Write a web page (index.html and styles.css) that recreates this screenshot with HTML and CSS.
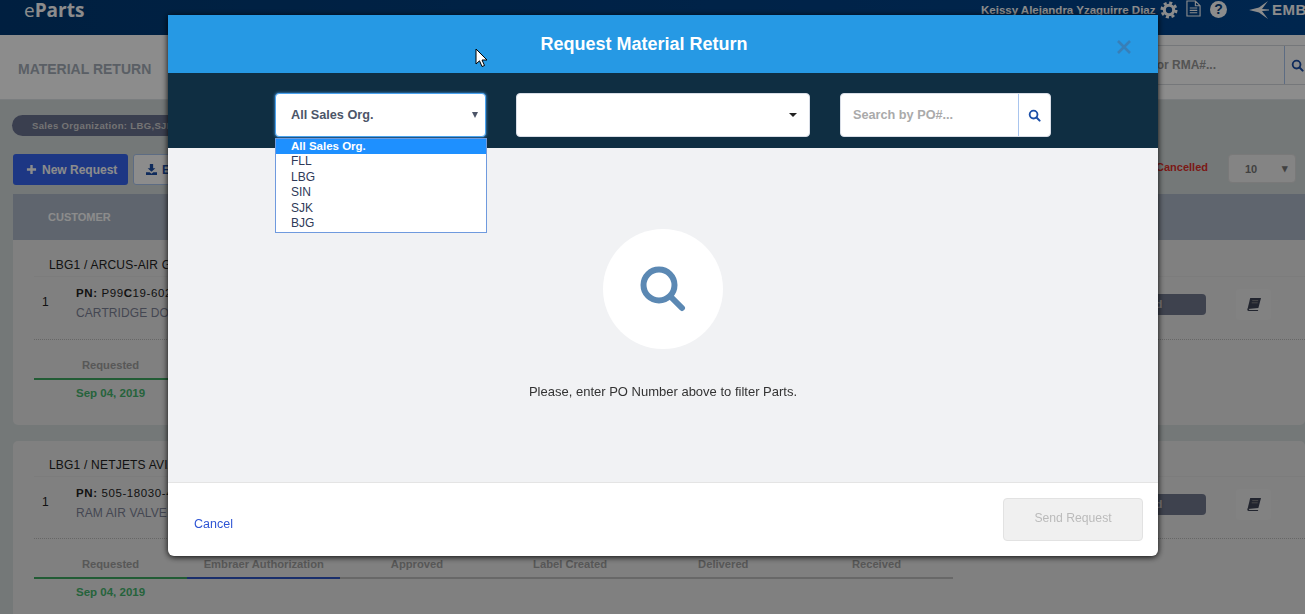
FILE: index.html
```html
<!DOCTYPE html>
<html lang="en">
<head>
    <meta charset="UTF-8">
    <meta name="viewport" content="width=device-width, initial-scale=1.0">
    <title>eParts - Material Return</title>
    <link rel="stylesheet" href="styles.css">
</head>
<body>
    <header class="topbar">
        <div class="brand"><span class="brand-e">e</span>Parts</div>
        <div class="topbar-right">
            <span class="user-name">Keissy Alejandra Yzaguirre Diaz</span>
            <svg class="top-icon gear" viewBox="0 0 20 20"><circle cx="10" cy="10" r="5.2" fill="none" stroke="#fff" stroke-width="3.4"/><circle cx="10" cy="10" r="8" fill="none" stroke="#fff" stroke-width="3" stroke-dasharray="3.4 2.88"/></svg>
            <svg class="top-icon doc" viewBox="0 0 16 18"><path d="M1 1h9l5 5v11H1zM10 1v5h5M4 8.500h8M4 11h8M4 13.500h8" fill="none" stroke="#fff" stroke-width="1.200"/></svg>
            <span class="help-icon">?</span>
            <svg class="logo-mark" viewBox="0 0 20 20"><path d="M0 10 10 7.500 19 1l-6 8 7 .5v1l-7 .5 6 8-9-6.500z" fill="#fff"/></svg>
            <span class="logo-text">EMBRAER</span>
        </div>
    </header>

    <section class="subbar">
        <h1>MATERIAL RETURN</h1>
        <div class="sub-search">
            <span class="sub-search-text">Search by PN or RMA#...</span>
            <span class="sub-search-btn">
                <svg class="mini-search" viewBox="0 0 14 14"><circle cx="6" cy="6" r="4.2" fill="none" stroke="#1c4fa8" stroke-width="2"/><path d="m9.2 9.2 3.3 3.3" stroke="#1c4fa8" stroke-width="2.2" stroke-linecap="round"/></svg>
            </span>
        </div>
    </section>

    <main class="content">
        <div class="pill">Sales Organization: LBG,SJK,SIN,FLL,BJG</div>
        <div class="toolbar">
            <button class="btn-primary">
                <svg class="btn-icon" viewBox="0 0 12 12"><path d="M6 1v10M1 6h10" stroke="#fff" stroke-width="2.6"/></svg>
                New Request
            </button>
            <button class="btn-outline">
                <svg class="btn-icon" viewBox="0 0 12 12"><path d="M4.2 0h3.6v4.5h2.4L6 8.5 1.8 4.5h2.4zM0 9h4l2 1.5L8 9h4v3H0z" fill="#1c4fa8"/></svg>
                Export
            </button>
            <div class="toolbar-right">
                <span class="status-cancelled">Cancelled</span>
                <div class="page-size"><span>10</span><span class="arrow">▾</span></div>
            </div>
        </div>

        <div class="table-head"><span>CUSTOMER</span></div>

        <article class="card">
            <div class="card-title">LBG1 / ARCUS-AIR GMBH</div>
            <div class="part-row">
                <span class="qty">1</span>
                <div class="part-info">
                    <div class="pn"><span class="pn-label">PN:</span> P99<b>C</b>19-602</div>
                    <div class="part-name">CARTRIDGE DOOR</div>
                </div>
                <span class="badge">Requested</span>
                <span class="book-btn">
                    <svg class="book" viewBox="0 0 14 13"><path d="M3.200 0H14l-2.600 10H.8z" fill="#3f4456"/><path d="M5.200 2.600h6M4.700 4.800h6" stroke="#8a8a8a" stroke-width=".9"/><path d="M.8 10C0 11 0 13 2 13h8.800l.5-1H2.400c-.8 0-.8-1 0-1h9z" fill="#3f4456"/></svg>
                </span>
            </div>
            <div class="steps">
                <div class="step done"><span class="step-label">Requested</span><span class="step-date">Sep 04, 2019</span></div>
                <div class="step"><span class="step-label">Embraer Authorization</span></div>
                <div class="step"><span class="step-label">Approved</span></div>
                <div class="step"><span class="step-label">Label Created</span></div>
                <div class="step"><span class="step-label">Delivered</span></div>
                <div class="step"><span class="step-label">Received</span></div>
            </div>
        </article>

        <article class="card">
            <div class="card-title">LBG1 / NETJETS AVIATION</div>
            <div class="part-row">
                <span class="qty">1</span>
                <div class="part-info">
                    <div class="pn"><span class="pn-label">PN:</span> 505-18030-4</div>
                    <div class="part-name">RAM AIR VALVE</div>
                </div>
                <span class="badge">Requested</span>
                <span class="book-btn">
                    <svg class="book" viewBox="0 0 14 13"><path d="M3.200 0H14l-2.600 10H.8z" fill="#3f4456"/><path d="M5.200 2.600h6M4.700 4.800h6" stroke="#8a8a8a" stroke-width=".9"/><path d="M.8 10C0 11 0 13 2 13h8.800l.5-1H2.400c-.8 0-.8-1 0-1h9z" fill="#3f4456"/></svg>
                </span>
            </div>
            <div class="steps">
                <div class="step done"><span class="step-label">Requested</span><span class="step-date">Sep 04, 2019</span></div>
                <div class="step current"><span class="step-label">Embraer Authorization</span></div>
                <div class="step"><span class="step-label">Approved</span></div>
                <div class="step"><span class="step-label">Label Created</span></div>
                <div class="step"><span class="step-label">Delivered</span></div>
                <div class="step"><span class="step-label">Received</span></div>
            </div>
        </article>
    </main>

    <div class="scrim"></div>

    <div class="modal">
        <div class="modal-header">
            <h2>Request Material Return</h2>
            <svg class="modal-close" viewBox="0 0 14 14"><path d="M1 1l12 12M13 1 1 13" stroke="#377fb8" stroke-width="2.600"/></svg>
        </div>
        <div class="modal-filters">
            <div class="select-wrap">
                <div class="fake-select focused">
                    <span>All Sales Org.</span>
                    <span class="select-arrow"></span>
                </div>
                <ul class="select-list">
                    <li class="active">All Sales Org.</li>
                    <li>FLL</li>
                    <li>LBG</li>
                    <li>SIN</li>
                    <li>SJK</li>
                    <li>BJG</li>
                </ul>
            </div>
            <div class="fake-select wide"><span class="select-arrow dark"></span></div>
            <div class="po-search">
                <span class="po-text">Search by PO#...</span>
                <span class="po-btn">
                    <svg class="mini-search" viewBox="0 0 14 14"><circle cx="6" cy="6" r="4.2" fill="none" stroke="#1c4fa8" stroke-width="2"/><path d="m9.2 9.2 3.3 3.3" stroke="#1c4fa8" stroke-width="2.2" stroke-linecap="round"/></svg>
                </span>
            </div>
        </div>
        <div class="modal-body">
            <div class="empty-circle">
                <svg class="empty-icon" viewBox="0 0 46 46"><circle cx="19" cy="19" r="15.500" fill="none" stroke="#5b88b3" stroke-width="6"/><path d="m31 31 11 11" stroke="#5b88b3" stroke-width="6" stroke-linecap="round"/></svg>
            </div>
            <p class="empty-text">Please, enter PO Number above to filter Parts.</p>
        </div>
        <div class="modal-footer">
            <a class="cancel-link">Cancel</a>
            <button class="send-btn">Send Request</button>
        </div>
    </div>

    <svg class="cursor" viewBox="0 0 13 20"><path d="M1 1v15l3.500-3.200L7 18.500l2.500-1L7 12h5z" fill="#fff" stroke="#000" stroke-width="1"/></svg>
</body>
</html>
```

FILE: styles.css
```css
html, body {
    height: 100%;
    overflow: hidden;
}

body {
    margin: 0;
    font-family: "Liberation Sans", Arial, sans-serif;
    font-size: 12px;
    background-color: #d4dbdb;
    color: #333;
}

/* page behind the dialog */
.topbar {
    height: 35px;
    box-sizing: border-box;
    padding: 0 0 0 24px;
    display: flex;
    justify-content: space-between;
    background: linear-gradient(to right, #003a75, #00458f);
    color: #fff;
}

.brand {
    font-family: "Open Sans", sans-serif;
    font-size: 19px;
    font-weight: 700;
    line-height: 20px;
    color: #fff;
}

.brand-e {
    font-weight: 400;
}

.topbar-right {
    display: flex;
    align-items: center;
    height: 19px;
    width: 324px;
    flex-shrink: 0;
    overflow: hidden;
    white-space: nowrap;
}

.user-name {
    padding-top: 1px;
    font-size: 11.5px;
    font-weight: 700;
    width: 179px;
    flex-shrink: 0;
}

.top-icon {
    flex-shrink: 0;
}

.gear {
    width: 18px;
    height: 18px;
}

.doc {
    width: 15px;
    height: 17px;
    margin-left: 8px;
    margin-top: -3px;
}

.help-icon {
    flex-shrink: 0;
    width: 17px;
    height: 17px;
    margin-left: 9px;
    border-radius: 50%;
    background-color: #fff;
    color: #003e80;
    font-size: 14px;
    font-weight: 700;
    line-height: 17px;
    text-align: center;
}

.logo-mark {
    flex-shrink: 0;
    width: 20px;
    height: 20px;
    margin-left: 22px;
}

.logo-text {
    margin-left: 3px;
    font-size: 15px;
    font-weight: 700;
    letter-spacing: .5px;
}

.subbar {
    height: 65px;
    box-sizing: border-box;
    padding: 10px 0 0 18px;
    display: flex;
    justify-content: space-between;
    background-color: #fff;
    border-bottom: 1px solid #dfe4e8;
}

.subbar h1 {
    margin: 0;
    font-size: 14px;
    font-weight: 700;
    line-height: 48px;
    color: #a5adb8;
}

.sub-search {
    width: 340px;
    height: 40px;
    margin-right: -15px;
    box-sizing: border-box;
    display: flex;
    justify-content: space-between;
    align-items: center;
    border: 1px solid #d6d9de;
    background-color: #fff;
    border-radius: 3px;
}

.sub-search-text {
    margin-left: 95px;
    font-size: 12px;
    font-weight: 700;
    color: #999;
}

.sub-search-btn {
    width: 35px;
    height: 38px;
    display: flex;
    align-items: center;
    border-left: 1px solid #a9c5ee;
    padding-left: 6px;
    box-sizing: border-box;
}

.mini-search {
    width: 13px;
    height: 13px;
}

.content {
    padding: 15px 0 0 13px;
}

.pill {
    width: 240px;
    height: 21px;
    margin-left: -1px;
    padding-left: 20px;
    box-sizing: border-box;
    border-radius: 11px;
    background-color: #6b7390;
    color: #d4d4d4;
    font-size: 9.5px;
    font-weight: 700;
    letter-spacing: .35px;
    line-height: 21px;
    white-space: nowrap;
    overflow: hidden;
}

.toolbar {
    height: 31px;
    margin: 18px 9px 9px 0;
    display: flex;
    gap: 5px;
}

.toolbar button {
    height: 31px;
    border-radius: 3px;
    font-family: inherit;
    font-size: 12px;
    font-weight: 700;
    display: flex;
    align-items: center;
    gap: 5px;
}

.btn-primary {
    width: 115px;
    padding: 0 0 0 13px;
    border: none;
    background-color: #3565f0;
    color: #fff;
}

.btn-outline {
    width: 100px;
    padding: 0 0 0 12px;
    border: 1px solid #a9c5ee;
    background-color: #fff;
    color: #1c4fa8;
}

.btn-icon {
    width: 11px;
    height: 11px;
}

.toolbar-right {
    margin-left: auto;
    display: flex;
    gap: 20px;
}

.status-cancelled {
    font-size: 11px;
    font-weight: 700;
    color: #e0302a;
    line-height: 27px;
}

.page-size {
    width: 68px;
    height: 29px;
    box-sizing: border-box;
    padding: 0 7px 0 16px;
    display: flex;
    justify-content: space-between;
    align-items: center;
    border: 1px solid #dcdcdc;
    border-radius: 4px;
    background-color: #f0f0f0;
    color: #777;
    font-size: 11px;
    font-weight: 700;
}

.table-head {
    height: 46px;
    padding-left: 35px;
    background-color: #aeb9c8;
    color: #fff;
    font-size: 11px;
    font-weight: 700;
    line-height: 46px;
}

.card {
    height: 185px;
    margin-bottom: 16px;
    box-sizing: border-box;
    padding: 18px 0 0 21px;
    background-color: #e9e9e9;
    border-radius: 0 0 5px 5px;
}

.card + .card {
    padding-top: 17px;
    border-radius: 5px;
}

.card-title {
    padding-left: 15px;
    font-size: 12px;
    letter-spacing: .2px;
    line-height: 14px;
    color: #222;
}

.part-row {
    height: 64px;
    margin-top: 4px;
    padding-right: 34px;
    box-sizing: border-box;
    display: flex;
    align-items: flex-start;
    border-bottom: 1px dotted #bbb;
    border-top: 1px solid #e2e2e2;
}

.card + .card .part-row {
    height: 63px;
}

.qty {
    width: 42px;
    padding: 18px 0 0 8px;
    box-sizing: border-box;
    font-size: 12px;
    color: #222;
}

.part-info {
    flex: 1;
    padding-top: 9px;
    font-size: 11.5px;
    white-space: nowrap;
}

.pn {
    line-height: 14px;
    letter-spacing: .6px;
    color: #222;
}

.pn-label {
    font-weight: 700;
}

.part-name {
    margin-top: 6px;
    font-size: 12px;
    letter-spacing: .1px;
    color: #7d8296;
}

.badge {
    width: 100px;
    height: 21px;
    margin-top: 17px;
    padding-right: 44px;
    box-sizing: border-box;
    border-radius: 4px;
    background-color: #71798f;
    color: #ddd;
    font-size: 11px;
    font-weight: 700;
    line-height: 21px;
    text-align: center;
}

.book-btn {
    width: 35px;
    height: 31px;
    margin: 12px 0 0 30px;
    display: flex;
    justify-content: center;
    align-items: center;
    border-radius: 3px;
    background-color: #ededed;
}

.book {
    width: 14px;
    height: 13px;
}

.steps {
    width: 919px;
    margin-top: 19px;
    display: flex;
}

.step {
    flex: 1;
    display: flex;
    flex-direction: column;
    align-items: center;
}

.step-label {
    width: 100%;
    padding-bottom: 6px;
    border-bottom: 2px solid #bdbdbd;
    color: #a0a0a0;
    font-size: 11.2px;
    font-weight: 700;
    line-height: 13px;
    text-align: center;
}

.step.done .step-label {
    border-bottom-color: #3fa862;
}

.step.current .step-label {
    border-bottom-color: #2f55c4;
}

.step-date {
    margin-top: 6px;
    color: #45b56d;
    font-size: 11.5px;
    font-weight: 700;
    line-height: 14px;
}

.scrim {
    position: fixed;
    inset: 0;
    background-color: rgba(0, 0, 0, .45);
}

/* dialog */
.modal {
    position: fixed;
    top: 15px;
    left: 168px;
    width: 990px;
    height: 541px;
    display: flex;
    flex-direction: column;
    border-radius: 0 0 6px 6px;
    background-color: #fff;
    box-shadow: 0 1px 6px rgba(0, 0, 0, .95);
}

.modal-header {
    height: 58px;
    flex-shrink: 0;
    padding-right: 38px;
    display: flex;
    justify-content: center;
    align-items: center;
    background-color: #2699e4;
}

.modal-header h2 {
    margin: 0;
    color: #fff;
    font-size: 18px;
    font-weight: 700;
}

.modal-close {
    position: absolute;
    top: 25px;
    right: 27px;
    width: 14px;
    height: 14px;
}

.modal-filters {
    height: 75px;
    flex-shrink: 0;
    box-sizing: border-box;
    padding-top: 20px;
    display: flex;
    justify-content: center;
    gap: 30px;
    background-color: #0f2e42;
}

.select-wrap {
    position: relative;
    width: 211px;
}

.fake-select {
    width: 211px;
    height: 44px;
    box-sizing: border-box;
    padding: 0 7px 0 15px;
    display: flex;
    justify-content: space-between;
    align-items: center;
    border: 1px solid #d8dde6;
    border-radius: 4px;
    background-color: #fff;
    color: #4c5568;
    font-size: 12.7px;
    font-weight: 700;
}

.fake-select.wide {
    width: 294px;
    justify-content: flex-end;
    padding-right: 12px;
}

.fake-select.focused {
    border-color: #4aa3f0;
    box-shadow: 0 0 3px #4aa3f0;
}

.select-arrow {
    width: 0;
    height: 0;
    border-left: 3px solid transparent;
    border-right: 3px solid transparent;
    border-top: 6px solid #4c5568;
}

.select-arrow.dark {
    border-left-width: 4px;
    border-right-width: 4px;
    border-top: 4px solid #222;
}

.select-list {
    position: absolute;
    top: 45px;
    left: 0;
    width: 212px;
    margin: 0;
    padding: 0 0 1px;
    box-sizing: border-box;
    list-style-type: none;
    border: 1px solid #6f9ade;
    background-color: #fff;
    color: #2e3a58;
    font-size: 12px;
    line-height: 15.4px;
}

.select-list li {
    padding-left: 15px;
}

.select-list li.active {
    background-color: #1e90ff;
    color: #fff;
    font-size: 11.5px;
    font-weight: 700;
}

.po-search {
    width: 211px;
    height: 44px;
    box-sizing: border-box;
    display: flex;
    justify-content: space-between;
    align-items: center;
    border: 1px solid #d8dde6;
    border-radius: 4px;
    background-color: #fff;
}

.po-text {
    margin-left: 12px;
    color: #aaa;
    font-size: 12.7px;
    font-weight: 700;
}

.po-btn {
    width: 32px;
    height: 42px;
    box-sizing: border-box;
    display: flex;
    justify-content: center;
    align-items: center;
    border-left: 1px solid #a9c5ee;
}

.modal-body {
    flex: 1;
    padding-top: 81px;
    display: flex;
    flex-direction: column;
    align-items: center;
    background-color: #f1f2f4;
}

.empty-circle {
    width: 120px;
    height: 120px;
    display: flex;
    justify-content: center;
    align-items: center;
    border-radius: 50%;
    background-color: #fff;
}

.empty-icon {
    width: 46px;
    height: 46px;
}

.empty-text {
    margin: 35px 0 0;
    color: #333;
    font-size: 13px;
    line-height: 15px;
}

.modal-footer {
    height: 74px;
    flex-shrink: 0;
    box-sizing: border-box;
    padding: 15px 15px 0 26px;
    display: flex;
    justify-content: space-between;
    border-top: 1px solid #e4e4e4;
    border-radius: 0 0 6px 6px;
}

.cancel-link {
    padding-top: 19px;
    color: #2f55d4;
    font-size: 12.5px;
}

.send-btn {
    width: 140px;
    height: 43px;
    border: 1px solid #e2e2e2;
    border-radius: 4px;
    background-color: #f0f0f0;
    color: #bbb;
    font-family: inherit;
    font-size: 12.2px;
    font-weight: 400;
    padding-bottom: 5px;
}

.cursor {
    position: fixed;
    top: 48px;
    left: 475px;
    width: 13px;
    height: 20px;
}
```
